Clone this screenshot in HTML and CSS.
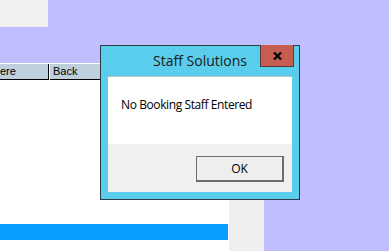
FILE: index.html
```html
<!DOCTYPE html>
<html lang="en">
  <head>
    <meta charset="UTF-8">
    <title>Staff Solutions</title>
    <link rel="stylesheet" href="styles.css">
  </head>
  <body>
    <div class="topbox"></div>
    <div class="main">
      <div class="panel">
        <div class="header">
          <div class="cell first">ere</div>
          <div class="cell">Back</div>
        </div>
        <div class="rows">
          <div class="selected"></div>
        </div>
      </div>
      <div class="side"></div>
    </div>

    <div class="dialog">
      <div class="titlebar">
        <span class="title">Staff Solutions</span>
        <div class="close">
          <svg width="9" height="8" viewBox="0 0 9 8"><path d="M1 0.5 L8 7.5 M8 0.5 L1 7.5" stroke="#000" stroke-width="2.2"/></svg>
        </div>
      </div>
      <div class="content">
        <div class="message">No Booking Staff Entered</div>
        <div class="buttons">
          <button class="ok">OK</button>
        </div>
      </div>
    </div>
  </body>
</html>
```

FILE: styles.css
```css
*{
    margin: 0;
    padding: 0;
    box-sizing: border-box;
}

body{
    background: #bfbfff;
    font-family: "Liberation Sans", Arial, sans-serif;
    width: 389px;
    height: 251px;
    overflow: hidden;
    position: relative;
}

.topbox{
    width: 48px;
    height: 27px;
    background: #f0f0f0;
}

.main{
    display: flex;
    margin-top: 36px;
    height: 188px;
}

.panel{
    width: 229px;
    background: #fff;
    padding-top: 1px;
    display: flex;
    flex-direction: column;
}

.header{
    display: flex;
    gap: 1px;
}

.cell{
    width: 120px;
    height: 16px;
    background: #bfcfdb;
    border-right: 1px solid #000;
    border-bottom: 1px solid #000;
    font-size: 11px;
    line-height: 15px;
    padding-left: 3px;
    color: #000;
}

.cell.first{
    width: 49px;
    flex: none;
    padding-left: 0;
}

.rows{
    flex: 1;
    padding-top: 144px;
}

.selected{
    width: 228px;
    height: 16px;
    background: #069eff;
}

.side{
    width: 35px;
    background: #efefef;
}

/* message box */
.dialog{
    position: absolute;
    left: 100px;
    top: 45px;
    width: 200px;
    height: 155px;
    background: #5bcdec;
    border: 1px solid #2b3a48;
    padding: 0 7px 7px 7px;
    display: flex;
    flex-direction: column;
}

.titlebar{
    height: 30px;
    position: relative;
    display: flex;
    align-items: center;
    justify-content: center;
}

.title{
    font-family: "Open Sans", "Noto Sans", sans-serif;
    font-size: 14px;
    color: #1a1a1a;
    margin-top: -1px;
}

.close{
    position: absolute;
    right: -2px;
    top: -1px;
    width: 34px;
    height: 22px;
    background: #c75d50;
    border: 1px solid #5a3a36;
    border-top: none;
    display: flex;
    align-items: center;
    justify-content: center;
}

.content{
    flex: 1;
    display: flex;
    flex-direction: column;
    border-top: 1px solid #b8c4cc;
}

.message{
    background: #fff;
    height: 67px;
    font-family: "Open Sans", "Noto Sans", sans-serif;
    font-size: 12px;
    letter-spacing: -0.4px;
    color: #000;
    padding: 19px 0 0 13px;
}

.buttons{
    flex: 1;
    background: #f0f0f0;
    padding: 12px 0 0 88px;
}

.ok{
    width: 88px;
    height: 26px;
    background: #eeeeee;
    border: 2px solid #6d6d6d;
    border-top-width: 1px;
    border-left-width: 1px;
    font-family: "Open Sans", "Noto Sans", sans-serif;
    font-size: 12px;
    color: #000;
}
```
